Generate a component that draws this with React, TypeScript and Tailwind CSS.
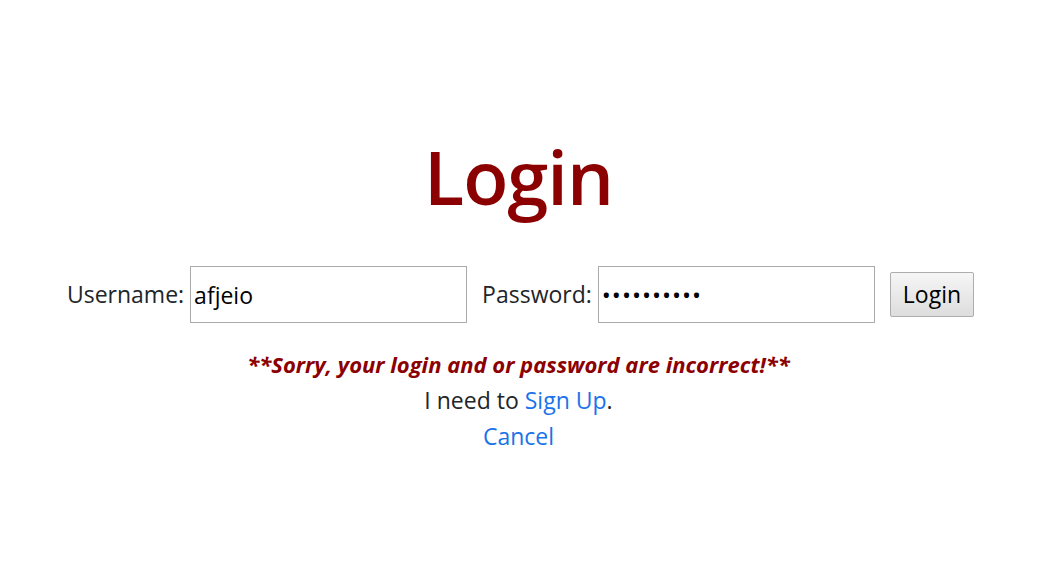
import React from "react";

export default function App() {
  return (
    <div
      className="min-h-[562px] w-full bg-white text-[#212529] flex flex-col items-center"
      style={{ fontFamily: '"Open Sans", "Noto Sans", sans-serif' }}
    >
      <h1 className="mt-[130px] text-[74px] leading-[94px] font-semibold text-[#8b0000] tracking-[-1px]">Login</h1>
      <div className="mt-[42px] flex items-center text-[23px] pl-[4px]">
        <label className="mr-[6px]">Username:</label>
        <input
          className="w-[277px] h-[57px] border border-[#aaaaaa] px-[3px] text-[23px] text-black outline-none"
          defaultValue="afjeio"
          style={{ fontFamily: '"Open Sans", "Noto Sans", sans-serif' }}
        />
        <label className="ml-[15px] mr-[6px]">Password:</label>
        <input
          type="password"
          className="w-[277px] h-[57px] border border-[#aaaaaa] px-[3px] text-[24px] tracking-[1px] text-black outline-none"
          defaultValue="abcdefghij"
        />
        <button className="ml-[15px] h-[45px] px-[12px] border border-[#adadad] rounded-[2px] bg-gradient-to-b from-[#f6f6f6] to-[#dddddd] text-[23px] text-black">
          Login
        </button>
      </div>
      <p className="mt-[26px] text-[22px] font-bold italic text-[#8b0000] leading-[30px]">
        **Sorry, your login and or password are incorrect!**
      </p>
      <p className="mt-[6px] text-[23px] leading-[30px]">
        I need to <a className="text-[#1a73e8]">Sign Up</a>.
      </p>
      <p className="mt-[6px] text-[23px] leading-[30px]">
        <a className="text-[#1a73e8]">Cancel</a>
      </p>
    </div>
  );
}
